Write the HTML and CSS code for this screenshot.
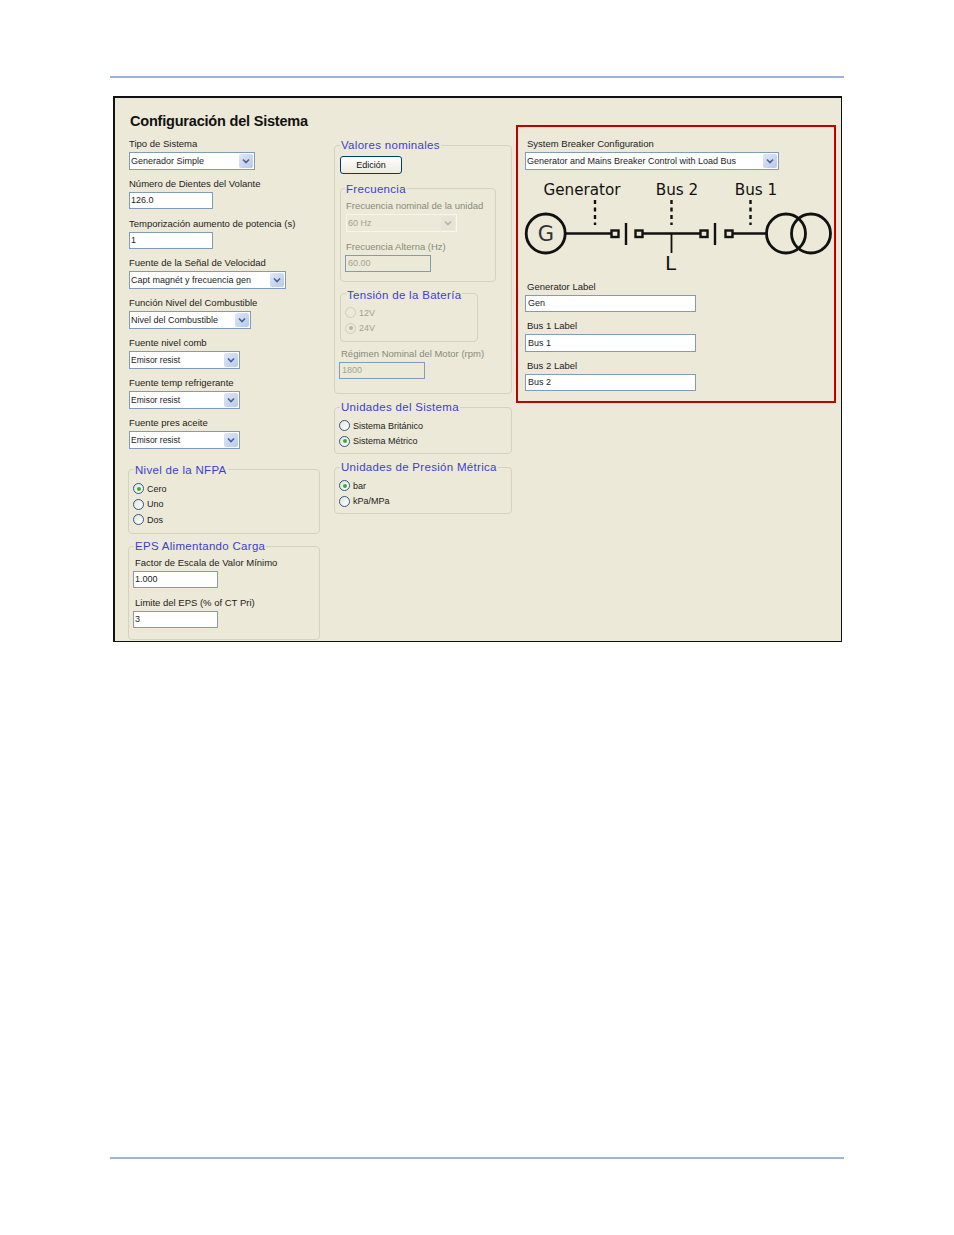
FILE: index.html
```html
<!DOCTYPE html>
<html lang="es">
<head>
<meta charset="utf-8">
<title>Configuración del Sistema</title>
<link rel="stylesheet" href="styles.css">
</head>
<body>
<div class="page">
  <hr class="rule">
  <main class="panel">
    <section class="col-left">
      <h1 class="title">Configuración del Sistema</h1>
      <div class="field"><div class="label">Tipo de Sistema</div><div class="select w126"><span class="value">Generador Simple</span><span class="arrow"><svg viewBox="0 0 8 6" class="chev"><path d="M1 1.5 4 4.5 7 1.5"/></svg></span></div></div>
      <div class="field"><div class="label">Número de Dientes del Volante</div><div class="input w84">126.0</div></div>
      <div class="field tight"><div class="label">Temporización aumento de potencia (s)</div><div class="input w84">1</div></div>
      <div class="field"><div class="label">Fuente de la Señal de Velocidad</div><div class="select w157"><span class="value">Capt magnét y frecuencia gen</span><span class="arrow"><svg viewBox="0 0 8 6" class="chev"><path d="M1 1.5 4 4.5 7 1.5"/></svg></span></div></div>
      <div class="field"><div class="label">Función Nivel del Combustible</div><div class="select w122"><span class="value">Nivel del Combustible</span><span class="arrow"><svg viewBox="0 0 8 6" class="chev"><path d="M1 1.5 4 4.5 7 1.5"/></svg></span></div></div>
      <div class="field"><div class="label">Fuente nivel comb</div><div class="select w111"><span class="value small">Emisor resist</span><span class="arrow"><svg viewBox="0 0 8 6" class="chev"><path d="M1 1.5 4 4.5 7 1.5"/></svg></span></div></div>
      <div class="field"><div class="label">Fuente temp refrigerante</div><div class="select w111"><span class="value small">Emisor resist</span><span class="arrow"><svg viewBox="0 0 8 6" class="chev"><path d="M1 1.5 4 4.5 7 1.5"/></svg></span></div></div>
      <div class="field"><div class="label">Fuente pres aceite</div><div class="select w111"><span class="value small">Emisor resist</span><span class="arrow"><svg viewBox="0 0 8 6" class="chev"><path d="M1 1.5 4 4.5 7 1.5"/></svg></span></div></div>

      <fieldset class="group nfpa">
        <legend>Nivel de la NFPA</legend>
        <div class="radio"><span class="dot on"></span>Cero</div>
        <div class="radio"><span class="dot"></span>Uno</div>
        <div class="radio"><span class="dot"></span>Dos</div>
      </fieldset>

      <fieldset class="group eps">
        <legend>EPS Alimentando Carga</legend>
        <div class="field"><div class="label eps-label">Factor de Escala de Valor Mínimo</div><div class="input w85">1.000</div></div>
        <div class="field"><div class="label eps-label">Limite del EPS (% of CT Pri)</div><div class="input w85">3</div></div>
      </fieldset>
    </section>

    <section class="col-mid">
      <fieldset class="group valores">
        <legend>Valores nominales</legend>
        <button class="btn" type="button">Edición</button>
        <fieldset class="group frecuencia">
          <legend>Frecuencia</legend>
          <div class="field"><div class="label off low">Frecuencia nominal de la unidad</div><div class="select w111 disabled"><span class="value">60 Hz</span><span class="arrow"><svg viewBox="0 0 8 6" class="chev"><path d="M1 1.5 4 4.5 7 1.5"/></svg></span></div></div>
          <div class="field"><div class="label off">Frecuencia Alterna (Hz)</div><div class="input w86 disabled">60.00</div></div>
        </fieldset>
        <fieldset class="group tension">
          <legend>Tensión de la Batería</legend>
          <div class="radio off"><span class="dot"></span>12V</div>
          <div class="radio off"><span class="dot on"></span>24V</div>
        </fieldset>
        <div class="field regimen"><div class="label off">Régimen Nominal del Motor (rpm)</div><div class="input w86 disabled">1800</div></div>
      </fieldset>

      <fieldset class="group unidades">
        <legend>Unidades del Sistema</legend>
        <div class="radio"><span class="dot"></span>Sistema Británico</div>
        <div class="radio"><span class="dot on"></span>Sistema Métrico</div>
      </fieldset>

      <fieldset class="group presion">
        <legend>Unidades de Presión Métrica</legend>
        <div class="radio"><span class="dot on"></span>bar</div>
        <div class="radio"><span class="dot"></span>kPa/MPa</div>
      </fieldset>
    </section>

    <section class="col-right">
      <div class="label">System Breaker Configuration</div>
      <div class="select w254"><span class="value">Generator and Mains Breaker Control with Load Bus</span><span class="arrow"><svg viewBox="0 0 8 6" class="chev"><path d="M1 1.5 4 4.5 7 1.5"/></svg></span></div>
      <svg class="diagram" viewBox="518 171 316 108" width="316" height="108">
        <g class="dg-text">
          <text x="582" y="195" text-anchor="middle">Generator</text>
          <text x="677" y="195" text-anchor="middle">Bus 2</text>
          <text x="756" y="195" text-anchor="middle">Bus 1</text>
        </g>
        <g class="dg-dash">
          <path d="M595 200V225M671.5 200V225M750.5 200V225"/>
        </g>
        <g class="dg-line">
          <circle cx="545.7" cy="233.5" r="19.5"/>
          <circle cx="786" cy="233.5" r="19.5"/>
          <circle cx="811" cy="233.5" r="19.5"/>
          <path d="M565.5 233.5H611M642.5 233.5H700M732.5 233.5H766.5"/>
          <rect x="611.5" y="230.5" width="7" height="6.5"/>
          <rect x="635.5" y="230.5" width="7" height="6.5"/>
          <rect x="700.5" y="230.5" width="7" height="6.5"/>
          <rect x="725.5" y="230.5" width="7" height="6.5"/>
          <path d="M626 223V245M715 223V245"/>
          <path class="thin" d="M671.5 233.5V253"/>
        </g>
        <text class="dg-g" x="546" y="241" text-anchor="middle">G</text>
        <text class="dg-l" x="670.5" y="270" text-anchor="middle">L</text>
      </svg>
      <div class="field tight"><div class="label">Generator Label</div><div class="input w171">Gen</div></div>
      <div class="field"><div class="label">Bus 1 Label</div><div class="input w171 h18">Bus 1</div></div>
      <div class="field"><div class="label">Bus 2 Label</div><div class="input w171">Bus 2</div></div>
    </section>
  </main>
  <hr class="rule bottom">
</div>
</body>
</html>
```

FILE: styles.css
```css
* { box-sizing: border-box; }
html, body { margin: 0; padding: 0; background: #fff; }
body { font-family: "Liberation Sans", Arial, sans-serif; font-size: 9.5px; color: #1c1c1c; }

.page { width: 954px; height: 1235px; padding: 76px 110px 0; }
.rule { margin: 0; border: 0; height: 2px; background: #9db4d8; width: 734px; }
.rule.bottom { margin-top: 515px; }

.panel {
  width: 729px; height: 546px; margin: 18px 0 0 3px;
  background: #ece9d8;
  border: 1px solid #111; border-top-width: 2px; border-left-width: 2px;
  display: grid; grid-template-columns: 219px 182px 1fr;
  overflow: hidden;
}
.col-left { padding: 15px 0 0 14px; }
.col-mid { padding: 40px 0 0 0; }
.col-right {
  align-self: start;
  width: 320px; height: 278px; margin: 27px 0 0 0;
  border: 2px solid #c00000; padding: 9px 0 0 7px;
}
.col-right > .label, .col-right .field .label { padding-left: 2px; }

.title { margin: 0 0 7px 1px; font-size: 14.5px; line-height: 16px; font-weight: bold; color: #111; letter-spacing: -0.2px; }

.field { margin-bottom: 7px; }
.field.tight { margin-bottom: 6px; }
.label { height: 16px; line-height: 15px; white-space: nowrap; }
.label.off { color: #8a8a7c; }
.label.low { line-height: 16px; }
.eps-label { padding-left: 2px; }

.select, .input {
  display: flex; align-items: center; background: #fff; font-size: 9px;
  border: 1px solid #7f9db9; white-space: nowrap; overflow: hidden;
}
.select { height: 18px; justify-content: space-between; padding: 0 1px; margin-bottom: -1px; }
.input { height: 17px; padding: 0 0 1px 2px; }
.col-left .input { padding-left: 1px; }
.h18 { height: 18px; margin-bottom: -1px; }
.value.small { font-size: 8.5px; }
.arrow {
  width: 14px; height: 14px; border-radius: 2px;
  background: linear-gradient(135deg, #dfe8f8, #b5c8ec);
  display: flex; align-items: center; justify-content: center;
}
.chev { width: 8px; height: 6px; }
.chev path { fill: none; stroke: #4d6185; stroke-width: 1.6; }

.w84 { width: 84px; } .w85 { width: 85px; } .w86 { width: 86px; }
.w111 { width: 111px; } .w122 { width: 122px; } .w126 { width: 126px; }
.w157 { width: 157px; } .w171 { width: 171px; } .w254 { width: 254px; }

.select.disabled { background: #ece9d8; border-color: #f6f5ee; color: #a3a393; }
.select.disabled .arrow { background: #e6e4d6; }
.select.disabled .chev path { stroke: #b5b4a6; }
.input.disabled { background: #ece9d8; color: #a3a393; }

.group { margin: 0; min-width: 0; padding: 0; border: 1px solid #d4d2c0; border-radius: 4px; }
.group legend { height: 14px; margin-left: 1px; padding: 0 1px; font-size: 11.5px; line-height: 14px; color: #3b3fd0; letter-spacing: .3px; white-space: nowrap; }

.nfpa { width: 192px; height: 72px; margin: 14px 0 0 -1px; padding: 5px 0 0 4px; }
.nfpa legend { line-height: 16px; }
.eps { width: 192px; height: 101px; margin: 5px 0 0 -1px; padding: 2px 0 0 4px; overflow: hidden; }

.valores { width: 178px; height: 256px; padding: 4px 0 0 5px; }
.valores > legend { margin-left: 0; }
.btn {
  display: block; width: 62px; height: 18px; padding: 0; margin: 0 0 7px;
  font: 9px "Liberation Sans", Arial, sans-serif; color: #111;
  background: linear-gradient(#ffffff, #eeeadf); border: 1px solid #003c74; border-radius: 3px;
}
.frecuencia { width: 156px; height: 101px; padding: 3px 0 0 5px; }
.frecuencia legend { margin-left: -1px; line-height: 16px; }
.frecuencia .input { margin-left: -1px; }
.frecuencia .field { margin-bottom: 8px; }
.tension { width: 138px; height: 56px; margin-top: 4px; padding: 5px 0 0 4px; }
.tension legend { margin-left: 1px; line-height: 18px; }
.regimen { margin: 4px 0 0 1px; }
.regimen .input { margin-left: -2px; }

.unidades { width: 178px; height: 54px; margin-top: 6px; padding: 4px 0 0 4px; }
.presion { width: 178px; height: 54px; margin-top: 6px; padding: 4px 0 0 4px; }

.radio { display: flex; align-items: center; height: 15.5px; gap: 3px; white-space: nowrap; font-size: 9px; }
.radio.off { color: #a3a393; }
.dot {
  position: relative; flex: none; width: 11px; height: 11px; border-radius: 50%;
  border: 1px solid #2a5a85; background: linear-gradient(135deg, #e4e4dc, #fff);
}
.dot.on::after {
  content: ""; position: absolute; left: 2.5px; top: 2.5px; width: 4px; height: 4px;
  border-radius: 50%; background: #35b035;
}
.radio.off .dot { border-color: #cfcdbd; background: #ece9d8; }
.radio.off .dot.on::after { background: #b5b4a6; }

.diagram { display: block; margin: 2px 0 0 -7px; }
.dg-text text { font: 15.2px "DejaVu Sans", sans-serif; fill: #111; }
.dg-dash path { fill: none; stroke: #111; stroke-width: 2.4; stroke-dasharray: 4 3.5; }
.dg-line circle, .dg-line rect, .dg-line path { fill: none; stroke: #111; stroke-width: 2.4; }
.dg-line circle { stroke-width: 2.8; }
.dg-line .thin { stroke-width: 1.8; }
.dg-g { font: 21px "DejaVu Sans", sans-serif; fill: #333; }
.dg-l { font: 20px "DejaVu Sans", sans-serif; fill: #111; }
```
